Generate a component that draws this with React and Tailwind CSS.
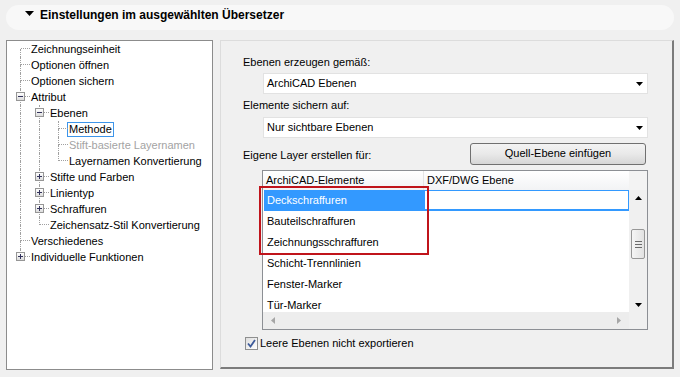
const DOT = "border-dotted border-[#a0a0a0]";

function Box({ sign }) {
  return (
    <div className="absolute left-[5px] top-[3px] flex h-[9px] w-[9px] items-center justify-center border border-[#969696] bg-linear-to-b from-white to-[#dcdcdc]">
      <div className="relative h-[1px] w-[5px] bg-[#33335c]">
        {sign === "+" && (
          <div className="absolute left-[2px] top-[-2px] h-[5px] w-[1px] bg-[#33335c]" />
        )}
      </div>
    </div>
  );
}

function Cell({ top, bottom, stub, box }) {
  return (
    <div className="relative grid h-4 w-[19px] shrink-0 grid-cols-[10px_9px] grid-rows-[8px_8px]">
      <div className={top ? `border-r ${DOT}` : ""} />
      <div className={stub ? `border-b ${DOT}` : ""} />
      <div className={bottom ? `border-r ${DOT}` : ""} />
      <div />
      {box && <Box sign={box} />}
    </div>
  );
}

const tree = [
  { t: "Zeichnungseinheit", g: [], top: false, last: false },
  { t: "Optionen öffnen", g: [], top: true, last: false },
  { t: "Optionen sichern", g: [], top: true, last: false },
  { t: "Attribut", g: [], top: true, last: false, box: "-" },
  { t: "Ebenen", g: [true], top: true, last: false, box: "-" },
  { t: "Methode", g: [true, true], top: true, last: false, focus: true },
  { t: "Stift-basierte Layernamen", g: [true, true], top: true, last: false, gray: true },
  { t: "Layernamen Konvertierung", g: [true, true], top: true, last: true },
  { t: "Stifte und Farben", g: [true], top: true, last: false, box: "+" },
  { t: "Linientyp", g: [true], top: true, last: false, box: "+" },
  { t: "Schraffuren", g: [true], top: true, last: false, box: "+" },
  { t: "Zeichensatz-Stil Konvertierung", g: [true], top: true, last: true },
  { t: "Verschiedenes", g: [], top: true, last: false },
  { t: "Individuelle Funktionen", g: [], top: true, last: true, box: "+" },
];

function DownArrow({ className = "" }) {
  return (
    <svg width="7" height="4" viewBox="0 0 7 4" className={className}>
      <path d="M0 0 H7 L3.5 4 Z" fill="#000" />
    </svg>
  );
}

function Dropdown({ value }) {
  return (
    <div className="ml-[20px] flex h-[21px] items-center justify-between border border-[#e2e2e2] bg-white pl-[3px] pr-[4px]">
      <span>{value}</span>
      <DownArrow />
    </div>
  );
}

const rows = [
  "Deckschraffuren",
  "Bauteilschraffuren",
  "Zeichnungsschraffuren",
  "Schicht-Trennlinien",
  "Fenster-Marker",
  "Tür-Marker",
];

export default function App() {
  return (
    <div className="h-[377px] w-[680px] overflow-hidden bg-[#f0f0f0] font-['Liberation_Sans',Arial,sans-serif] text-[11px] leading-[13px] text-black">
      {/* Header */}
      <div className="ml-[6px] mt-[5px] flex h-[25px] w-[668px] items-start gap-[6px] rounded-full bg-[#f8f8f8] pl-[19px] pt-[5px]">
        <svg width="9" height="5" viewBox="0 0 9 5" className="mt-[1px]">
          <path d="M0 0 H9 L4.5 5 Z" fill="#000" />
        </svg>
        <span className="-mt-[2px] text-[12px] font-bold leading-[14px]">
          Einstellungen im ausgewählten Übersetzer
        </span>
      </div>

      <div className="ml-[6px] mt-[10px] flex gap-[7px]">
        {/* Tree */}
        <div className="h-[330px] w-[207px] border border-[#8c8c8c] bg-white pl-[4px]">
          {tree.map((n, i) => (
            <div key={i} className="flex h-4 items-center">
              {n.g.map((c, j) => (
                <Cell key={j} top={c} bottom={c} stub={false} />
              ))}
              <Cell top={n.top} bottom={!n.last} stub box={n.box} />
              {n.focus ? (
                <span className="-ml-[1px] border border-[#3d95ea] px-[1px] leading-[13px]">
                  {n.t}
                </span>
              ) : (
                <span
                  className={`ml-[1px] whitespace-nowrap ${n.gray ? "text-[#a3a3a3]" : ""}`}
                >
                  {n.t}
                </span>
              )}
            </div>
          ))}
        </div>

        {/* Right panel */}
        <div className="flex h-[329px] w-[454px] flex-col border-l border-t border-b-2 border-r-2 border-l-[#dcdcdc] border-t-[#dcdcdc] border-b-[#7c7c7c] border-r-[#7c7c7c] pl-[22px] pr-[24px] pt-[15px]">
          <div className="h-[13px]">Ebenen erzeugen gemäß:</div>
          <div className="mt-[4px]">
            <Dropdown value="ArchiCAD Ebenen" />
          </div>
          <div className="mt-[5px] h-[13px]">Elemente sichern auf:</div>
          <div className="mt-[5px]">
            <Dropdown value="Nur sichtbare Ebenen" />
          </div>
          <div className="mt-[5px] flex h-[22px] items-start justify-between">
            <span className="pt-[6px]">Eigene Layer erstellen für:</span>
            <div className="mr-[2px] flex h-[22px] w-[176px] items-center justify-center rounded-[3px] border border-[#707070] bg-linear-to-b from-[#f3f3f3] via-[#e9e9e9] to-[#d6d6d6] pb-[1px]">
              Quell-Ebene einfügen
            </div>
          </div>

          {/* List */}
          <div className="relative ml-[19px] mt-[5px] grid h-[160px] grid-cols-[1fr_18px] grid-rows-[1fr_17px] border border-[#8c8f94] bg-white">
            <div className="overflow-hidden">
              <div className="flex h-[19px] bg-linear-to-b from-white to-[#f2f3f5]">
                <div className="flex w-[161px] items-center border-r border-[#e5e5e5] pl-[3px]">
                  ArchiCAD-Elemente
                </div>
                <div className="flex flex-1 items-center pl-[3px]">DXF/DWG Ebene</div>
              </div>
              {rows.map((r, i) => (
                <div key={r} className="flex h-[21px]">
                  <div
                    className={`ml-[1px] flex w-[160px] items-center pl-[3px] ${
                      i === 0 ? "bg-[#3399ff] text-white" : ""
                    }`}
                  >
                    {r}
                  </div>
                  <div
                    className={`flex-1 ${
                      i === 0 ? "border border-b-2 border-[#3399ff]" : ""
                    }`}
                  />
                </div>
              ))}
            </div>
            {/* vertical scrollbar */}
            <div className="flex flex-col bg-[#f0f0f0]">
              <div className="h-[19px] bg-[#f3f3f3]" />
              <div className="flex h-[17px] items-center justify-center pb-[2px]">
                <DownArrow className="rotate-180" />
              </div>
              <div className="h-[22px]" />
              <div className="mx-[2px] flex h-[30px] flex-col items-center justify-center gap-[2px] rounded-[2px] border border-[#979797] bg-linear-to-r from-[#f5f5f5] to-[#e2e2e2]">
                <div className="h-[1px] w-[7px] bg-[#6b6b6b]" />
                <div className="h-[1px] w-[7px] bg-[#6b6b6b]" />
                <div className="h-[1px] w-[7px] bg-[#6b6b6b]" />
              </div>
              <div className="flex-1" />
              <div className="flex h-[17px] items-center justify-center pt-[2px]">
                <DownArrow />
              </div>
            </div>
            {/* horizontal scrollbar */}
            <div className="flex items-center justify-between bg-[#ededed] px-[8px]">
              <svg width="4" height="7" viewBox="0 0 4 7">
                <path d="M4 0 V7 L0 3.5 Z" fill="#a6a6a6" />
              </svg>
              <svg width="4" height="7" viewBox="0 0 4 7">
                <path d="M0 0 V7 L4 3.5 Z" fill="#a6a6a6" />
              </svg>
            </div>
            <div className="bg-[#f0f0f0]" />

            {/* annotation */}
            <div className="absolute -left-[4px] top-[15px] h-[69px] w-[170px] border-2 border-[#c0141b]" />
          </div>

          <div className="ml-[2px] mt-[7px] flex h-[13px] items-center gap-[2px]">
            <div className="flex h-[13px] w-[13px] items-center justify-center border border-[#8e8f8f] bg-linear-to-br from-[#dedede] to-white">
              <svg width="9" height="9" viewBox="0 0 9 9">
                <path d="M1 4.5 L3.5 7.5 L8 1" fill="none" stroke="#3c5a9a" strokeWidth="1.8" />
              </svg>
            </div>
            <span>Leere Ebenen nicht exportieren</span>
          </div>
        </div>
      </div>
    </div>
  );
}
